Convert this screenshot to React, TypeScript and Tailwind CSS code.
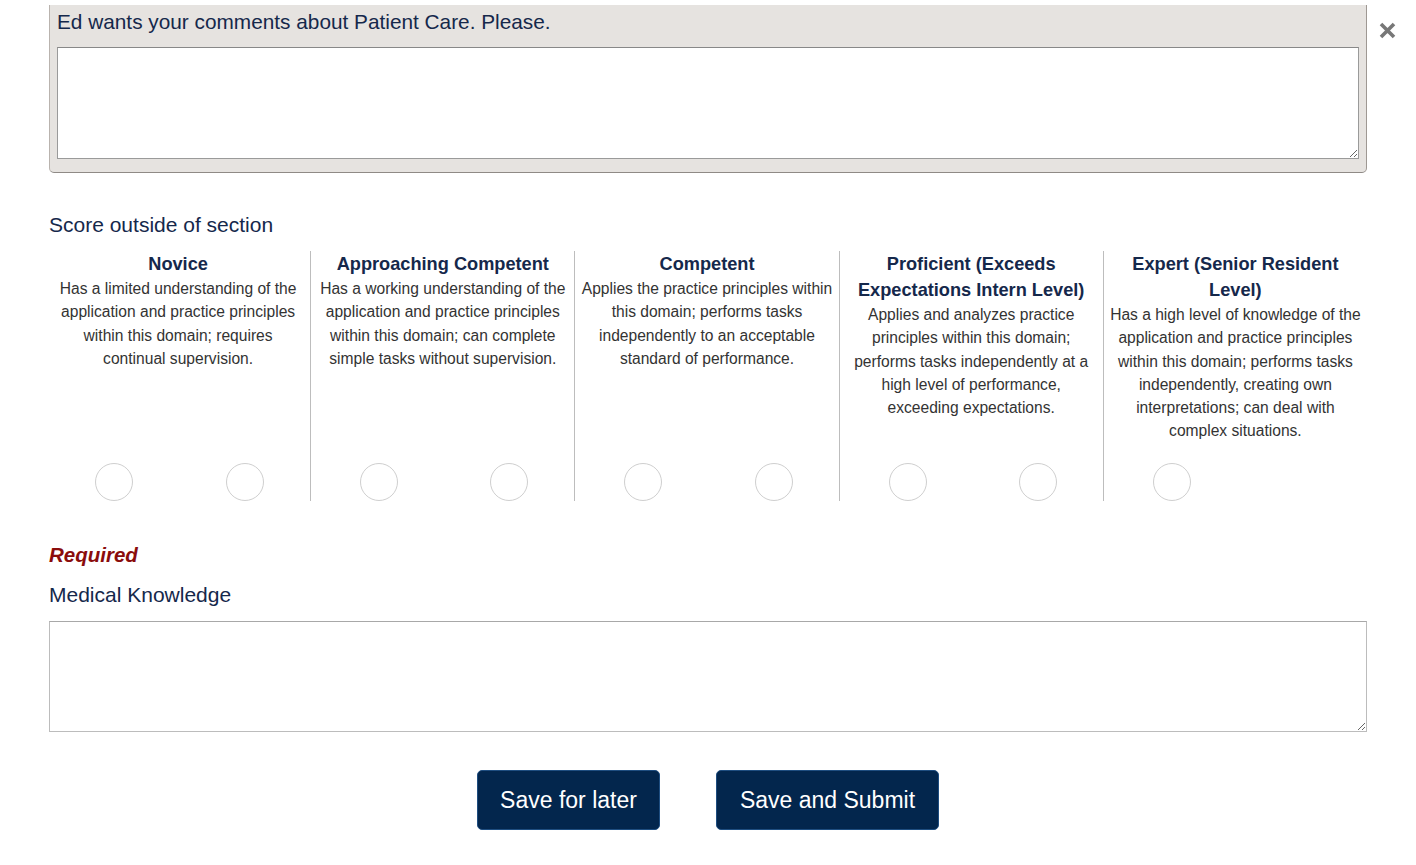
import React from 'react';

const levels = [
  {
    title: 'Novice',
    desc: 'Has a limited understanding of the application and practice principles within this domain; requires continual supervision.',
    radios: 2,
  },
  {
    title: 'Approaching Competent',
    desc: 'Has a working understanding of the application and practice principles within this domain; can complete simple tasks without supervision.',
    radios: 2,
  },
  {
    title: 'Competent',
    desc: 'Applies the practice principles within this domain; performs tasks independently to an acceptable standard of performance.',
    radios: 2,
  },
  {
    title: 'Proficient (Exceeds Expectations Intern Level)',
    desc: 'Applies and analyzes practice principles within this domain; performs tasks independently at a high level of performance, exceeding expectations.',
    radios: 2,
  },
  {
    title: 'Expert (Senior Resident Level)',
    desc: 'Has a high level of knowledge of the application and practice principles within this domain; performs tasks independently, creating own interpretations; can deal with complex situations.',
    radios: 1,
  },
];

const Radio = () => (
  <span className="block w-[38px] h-[38px] rounded-full border border-[#cfcfcf] bg-white" />
);

export default function App() {
  return (
    <div className="relative min-h-screen bg-white px-[49px] pt-[5px] font-['Liberation_Sans',Arial,sans-serif]">
      {/* close */}
      <button className="absolute left-[1378px] top-[21px] text-[#777]">
        <svg width="19" height="19" viewBox="0 0 19 19">
          <path d="M3 3 L16 16 M16 3 L3 16" stroke="currentColor" strokeWidth="3.6" strokeLinecap="butt" />
        </svg>
      </button>

      {/* comment panel */}
      <div className="bg-[#e6e3e0] border border-t-0 border-[#b9b3ae] border-b-[#8f8a86] border-r-[#9e9893] rounded-b-[5px] px-[7px] pt-[5px] pb-[13px]">
        <div className="text-[20.8px] leading-[24px] text-[#15284b]">
          Ed wants your comments about Patient Care. Please.
        </div>
        <textarea className="block mt-[13px] w-full h-[112px] bg-white border border-[#9a9a9a] border-t-[#888] resize-y" />
      </div>

      {/* score section */}
      <div className="mt-[40px] text-[21px] leading-[24px] text-[#15284b]">Score outside of section</div>

      <div className="mt-[14px] grid grid-cols-5 -ml-[3px] w-[1321px]">
        {levels.map((l, i) => (
          <div
            key={l.title}
            className={`flex flex-col h-[250px] ${i > 0 ? 'border-l border-[#bdbdbd]' : ''}`}
          >
            <div className="text-center text-[18.2px] leading-[26px] font-bold text-[#15284b] px-[8px]">{l.title}</div>
            <div className="text-center text-[15.6px] leading-[23.3px] text-[#333] px-[6px]">{l.desc}</div>
            <div className="mt-auto flex pl-[3px]">
              <div className="w-1/2 flex justify-center">
                <Radio />
              </div>
              <div className="w-1/2 flex justify-center">{l.radios > 1 && <Radio />}</div>
            </div>
          </div>
        ))}
      </div>

      <div className="mt-[42px] text-[20.5px] leading-[24px] font-bold italic text-[#8a0c0c]">Required</div>
      <div className="mt-[16px] text-[21px] leading-[24px] text-[#15284b]">Medical Knowledge</div>
      <textarea className="block mt-[14px] w-full h-[111px] bg-white border border-[#bcbcbc] border-t-[#a8a8a8] resize-y" />

      <div className="mt-[38px] flex justify-center gap-[56px]">
        <button className="w-[183px] h-[60px] rounded-[5px] bg-[#03264d] border border-[#1e4d80] text-white text-[23px]">
          Save for later
        </button>
        <button className="w-[223px] h-[60px] rounded-[5px] bg-[#03264d] border border-[#1e4d80] text-white text-[23px]">
          Save and Submit
        </button>
      </div>
    </div>
  );
}
